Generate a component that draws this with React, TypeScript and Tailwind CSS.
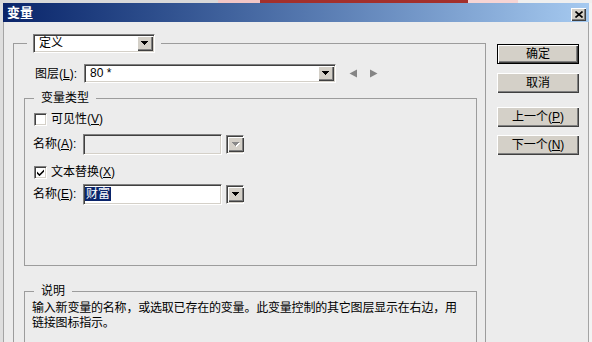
import React from 'react';

// classic 3D edges
const raised =
  'bg-[#d4d0c8] shadow-[inset_1px_1px_0_#ffffff,inset_-1px_-1px_0_#404040,inset_-2px_-2px_0_#808080]';
const sunken =
  'border border-t-[#808080] border-l-[#808080] border-r-white border-b-white shadow-[inset_1px_1px_0_#404040,inset_-1px_-1px_0_#d4d0c8] p-px';

function Caret({ disabled }: { disabled?: boolean }) {
  const c = disabled ? '#8a8a8a' : '#000000';
  return (
    <svg width="8" height="5" viewBox="0 0 8 5" shapeRendering="crispEdges">
      {disabled && (
        <g fill="#ffffff">
          <rect x="1" y="1" width="7" height="1" />
          <rect x="2" y="2" width="5" height="1" />
          <rect x="3" y="3" width="3" height="1" />
          <rect x="4" y="4" width="1" height="1" />
        </g>
      )}
      <g fill={c}>
        <rect x="0" y="0" width="7" height="1" />
        <rect x="1" y="1" width="5" height="1" />
        <rect x="2" y="2" width="3" height="1" />
        <rect x="3" y="3" width="1" height="1" />
      </g>
    </svg>
  );
}

function DropBtn({ disabled }: { disabled?: boolean }) {
  return (
    <div className={`${raised} w-[16px] h-full flex items-center justify-center`}>
      <Caret disabled={disabled} />
    </div>
  );
}

function Combo({ width, children }: { width: string; children: React.ReactNode }) {
  return (
    <div className={`${sunken} ${width} h-[19px] bg-white flex`}>
      <div className="flex-1 pl-[4px] text-[12px] leading-[15px] whitespace-nowrap">{children}</div>
      <DropBtn />
    </div>
  );
}

function LoneDrop({ disabled }: { disabled?: boolean }) {
  return (
    <div className={`${sunken} w-[18px] h-[19px] ml-[4px] mt-px`}>
      <DropBtn disabled={disabled} />
    </div>
  );
}

function Check({ checked }: { checked?: boolean }) {
  return (
    <div className={`${sunken} w-[13px] h-[13px] bg-white flex items-center justify-center`}>
      {checked && (
        <svg width="7" height="7" viewBox="0 0 7 7">
          <path d="M0 2.5 L2.5 5 L7 0.5 V2.8 L2.5 7.2 L0 4.7 Z" fill="#000" />
        </svg>
      )}
    </div>
  );
}

function Btn({ children, primary }: { children: React.ReactNode; primary?: boolean }) {
  return (
    <div
      className={`${raised} ${primary ? 'border border-black' : ''} w-[82px] h-[20px] flex items-center justify-center text-[12px] leading-none`}
    >
      {children}
    </div>
  );
}

export default function App() {
  return (
    <div className="w-[592px] h-[342px] overflow-hidden bg-[#ececec] flex flex-col text-black font-['Liberation_Sans','Noto_Sans_CJK_SC',sans-serif]">
      {/* strip of the window behind */}
      <div className="h-[3px] flex shrink-0">
        <div className="w-[218px] bg-[#d9d9d9]" />
        <div className="w-[42px] bg-[#f2c6c6]" />
        <div className="w-[208px] bg-[#a3302c]" />
        <div className="w-[50px] bg-[#f6d4d4]" />
        <div className="flex-1 bg-[#efefef]" />
      </div>

      <div className="flex-1 flex">
        <div className="w-[3px] bg-[#dedede]" />
        <div className="flex-1 flex flex-col">
          {/* Title bar */}
          <div className="h-[19px] shrink-0 bg-linear-to-r from-[#0a246a] to-[#a6caf0] flex items-center justify-between pl-[4px] pr-[3px]">
            <span className="text-white font-bold text-[13px] leading-none">变量</span>
            <div className={`${raised} w-[15px] h-[13px] mt-[3px] flex items-center justify-center`}>
              <svg width="8" height="7" viewBox="0 0 8 7">
                <path d="M0.5 0.5 L7.5 6.5 M7.5 0.5 L0.5 6.5" stroke="#000" strokeWidth="1.6" />
              </svg>
            </div>
          </div>

          {/* Body */}
          <div className="flex-1 flex border-x border-[#a4a4a4]">
            {/* Left: group boxes */}
            <fieldset className="ml-[9px] mt-[12px] w-[473px] h-[330px] border border-[#9c9c9c]">
              <legend className="ml-[13px] px-[6px]">
                <Combo width="w-[122px]">定义</Combo>
              </legend>
              <div className="pl-[10px]">
                <div className="mt-[11px] pl-[11px] flex items-center">
                  <span className="w-[49px] text-[12px] whitespace-nowrap">
                    图层(<u>L</u>):
                  </span>
                  <Combo width="w-[252px]">80 *</Combo>
                  <svg className="ml-[13px]" width="9" height="9" viewBox="0 0 9 9">
                    <path d="M8 0.5 V8.5 L0.5 4.5 Z" fill="#858585" />
                  </svg>
                  <svg className="ml-[11px]" width="9" height="9" viewBox="0 0 9 9">
                    <path d="M1 0.5 V8.5 L8.5 4.5 Z" fill="#858585" />
                  </svg>
                </div>

                {/* 变量类型 */}
                <fieldset className="mt-[8px] w-[453px] h-[175px] border border-[#9c9c9c]">
                  <legend className="ml-[9px] px-[7px] text-[12px] leading-[14px]">变量类型</legend>
                  <div className="mt-[7px] pl-[9px] h-[14px] flex items-center">
                    <Check />
                    <span className="ml-[4px] text-[12px]">
                      可见性(<u>V</u>)
                    </span>
                  </div>
                  <div className="mt-[8px] pl-[8px] flex items-start">
                    <span className="w-[50px] text-[12px] leading-[21px] whitespace-nowrap">
                      名称(<u>A</u>):
                    </span>
                    <div className={`${sunken} w-[139px] h-[21px] bg-[#ececec]`} />
                    <LoneDrop disabled />
                  </div>
                  <div className="mt-[10px] pl-[9px] h-[14px] flex items-center">
                    <Check checked />
                    <span className="ml-[4px] text-[12px]">
                      文本替换(<u>X</u>)
                    </span>
                  </div>
                  <div className="mt-[5px] pl-[8px] flex items-start">
                    <span className="w-[50px] text-[12px] leading-[21px] whitespace-nowrap">
                      名称(<u>E</u>):
                    </span>
                    <div className={`${sunken} w-[139px] h-[21px] bg-white text-[12px] leading-[17px]`}>
                      <span className="bg-[#0a246a] text-white px-px">财富</span>
                    </div>
                    <LoneDrop />
                  </div>
                </fieldset>

                {/* 说明 */}
                <fieldset className="mt-[18px] w-[453px] h-[80px] border border-[#9c9c9c]">
                  <legend className="ml-[9px] px-[7px] text-[12px] leading-[14px]">说明</legend>
                  <p className="mt-[3px] pl-[7px] text-[12px] leading-[15px] tracking-[-0.2px] whitespace-nowrap">
                    输入新变量的名称，或选取已存在的变量。此变量控制的其它图层显示在右边，用
                    <br />
                    链接图标指示。
                  </p>
                </fieldset>
              </div>
            </fieldset>

            {/* Right: buttons */}
            <div className="ml-[11px] flex flex-col">
              <div className="mt-[22px]">
                <Btn primary>确定</Btn>
              </div>
              <div className="mt-[9px]">
                <Btn>取消</Btn>
              </div>
              <div className="mt-[14px]">
                <Btn>
                  上一个(<u>P</u>)
                </Btn>
              </div>
              <div className="mt-[8px]">
                <Btn>
                  下一个(<u>N</u>)
                </Btn>
              </div>
            </div>
          </div>
        </div>
        <div className="w-[3px] bg-[#f3f3f3]" />
      </div>
    </div>
  );
}
